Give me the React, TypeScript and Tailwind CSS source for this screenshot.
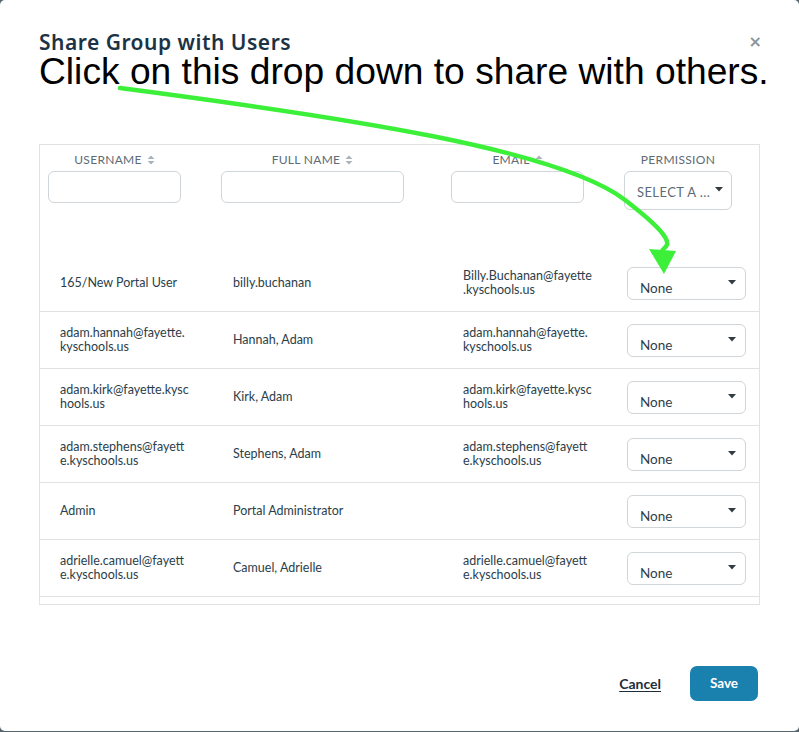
import React from "react";

const rows = [
  { u: ["165/New Portal User"], f: "billy.buchanan", e: ["Billy.Buchanan@fayette", ".kyschools.us"] },
  { u: ["adam.hannah@fayette.", "kyschools.us"], f: "Hannah, Adam", e: ["adam.hannah@fayette.", "kyschools.us"] },
  { u: ["adam.kirk@fayette.kysc", "hools.us"], f: "Kirk, Adam", e: ["adam.kirk@fayette.kysc", "hools.us"] },
  { u: ["adam.stephens@fayett", "e.kyschools.us"], f: "Stephens, Adam", e: ["adam.stephens@fayett", "e.kyschools.us"] },
  { u: ["Admin"], f: "Portal Administrator", e: [] as string[] },
  { u: ["adrielle.camuel@fayett", "e.kyschools.us"], f: "Camuel, Adrielle", e: ["adrielle.camuel@fayett", "e.kyschools.us"] },
];

const font = { fontFamily: "Lato, 'Noto Sans', sans-serif" };

function SortIcon() {
  return (
    <svg width="8" height="10" viewBox="0 0 8 10" className="inline-block ml-[5px]">
      <path d="M4 0.5 L7.5 4 H0.5 Z" fill="#aab3b9" />
      <path d="M4 9.5 L7.5 6 H0.5 Z" fill="#aab3b9" />
    </svg>
  );
}

function Caret() {
  return (
    <svg width="8" height="5" viewBox="0 0 8 5">
      <path d="M0 0 H8 L4 4.5 Z" fill="#333b40" />
    </svg>
  );
}

function Lines({ lines }: { lines: string[] }) {
  return (
    <div className="leading-[14px]">
      {lines.map((l, i) => (
        <div key={i}>{l}</div>
      ))}
    </div>
  );
}

export default function App() {
  return (
    <div className="w-[799px] h-[732px] bg-[#56646b] relative overflow-hidden" style={font}>
      <div className="h-[731px] bg-white rounded-[5px] flex flex-col px-[39px] pt-[30px] relative">
        <div className="flex items-start justify-between">
          <div className="text-[21px] leading-[24px] text-[#1b3345] tracking-[0.5px]" style={{ fontFamily: "'Noto Sans', sans-serif", fontWeight: 600 }}>
            Share Group with Users
          </div>
          <div className="text-[#8b959b] text-[16px] leading-[16px] mt-[4px] -mr-[2px] font-bold" style={{ fontFamily: "'DejaVu Sans', sans-serif" }}>×</div>
        </div>
        <div className="text-[37.2px] leading-[38px] text-black -mt-[2px] whitespace-nowrap" style={{ fontFamily: "'Liberation Sans', Arial, sans-serif" }}>
          Click on this drop down to share with others.
        </div>

        <div className="mt-[54px] border border-[#dfe3e6] h-[461px] flex flex-col">
          <div className="grid grid-cols-[173px_230px_175px_140px] h-[110px]">
            {[
              { label: "USERNAME", w: "w-[133px]" },
              { label: "FULL NAME", w: "w-[183px]" },
              { label: "EMAIL", w: "w-[133px]" },
            ].map((c) => (
              <div key={c.label} className="pl-[8px] pt-[8px]">
                <div className={`${c.w} flex flex-col items-center`}>
                  <div className="text-[12px] leading-[14px] text-[#5d6b75] tracking-[0.3px] flex items-center">
                    {c.label}
                    <SortIcon />
                  </div>
                  <div className={`${c.w} h-[32px] mt-[4px] border border-[#cfd5d9] rounded-[6px]`} />
                </div>
              </div>
            ))}
            <div className="pl-[6px] pt-[8px]">
              <div className="w-[108px] flex flex-col items-center">
                <div className="text-[12px] leading-[14px] text-[#5d6b75] tracking-[0.3px]">PERMISSION</div>
                <div className="w-[108px] h-[39px] mt-[4px] border border-[#cfd5d9] rounded-[6px] flex items-center pl-[12px] pr-[8px] pt-[4px] justify-between">
                  <span className="text-[13px] text-[#5d6b75] tracking-[0.4px]">SELECT A ...</span>
                  <span className="-mt-[6px]"><Caret /></span>
                </div>
              </div>
            </div>
          </div>
          {rows.map((r, i) => (
            <div key={i} className="grid grid-cols-[173px_230px_175px_140px] h-[57px] border-b border-[#dfe3e6] text-[12.5px] text-[#2b3e4a] items-center">
              <div className="pl-[20px]"><Lines lines={r.u} /></div>
              <div className="pl-[20px]">{r.f}</div>
              <div className="pl-[20px]"><Lines lines={r.e} /></div>
              <div className="pl-[9px]">
                <div className="w-[119px] h-[33px] border border-[#cfd5d9] rounded-[6px] flex justify-between pl-[12px] pr-[9px] pt-[12px]">
                  <span className="text-[13.5px] text-[#2b3e4a] leading-[16px]">None</span>
                  <span><Caret /></span>
                </div>
              </div>
            </div>
          ))}
        </div>

        <div className="mt-[61px] flex justify-end items-center gap-[29px] mr-[2px]">
          <button className="text-[14px] font-bold text-[#1d2d3a] underline underline-offset-[2px]">Cancel</button>
          <button className="w-[68px] h-[35px] bg-[#1a80ad] rounded-[7px] text-white text-[13.5px] font-bold">Save</button>
        </div>

        <svg className="absolute left-0 top-0 pointer-events-none" width="799" height="731" viewBox="0 0 799 731">
          <path d="M120 88 C 350 118, 560 150, 625 200 S 660 245, 662 252" fill="none" stroke="#3cf03a" strokeWidth="4.5" strokeLinecap="round" />
          <path d="M649 249 L676 251 L664 274 Z" fill="#3cf03a" />
        </svg>
      </div>
    </div>
  );
}
